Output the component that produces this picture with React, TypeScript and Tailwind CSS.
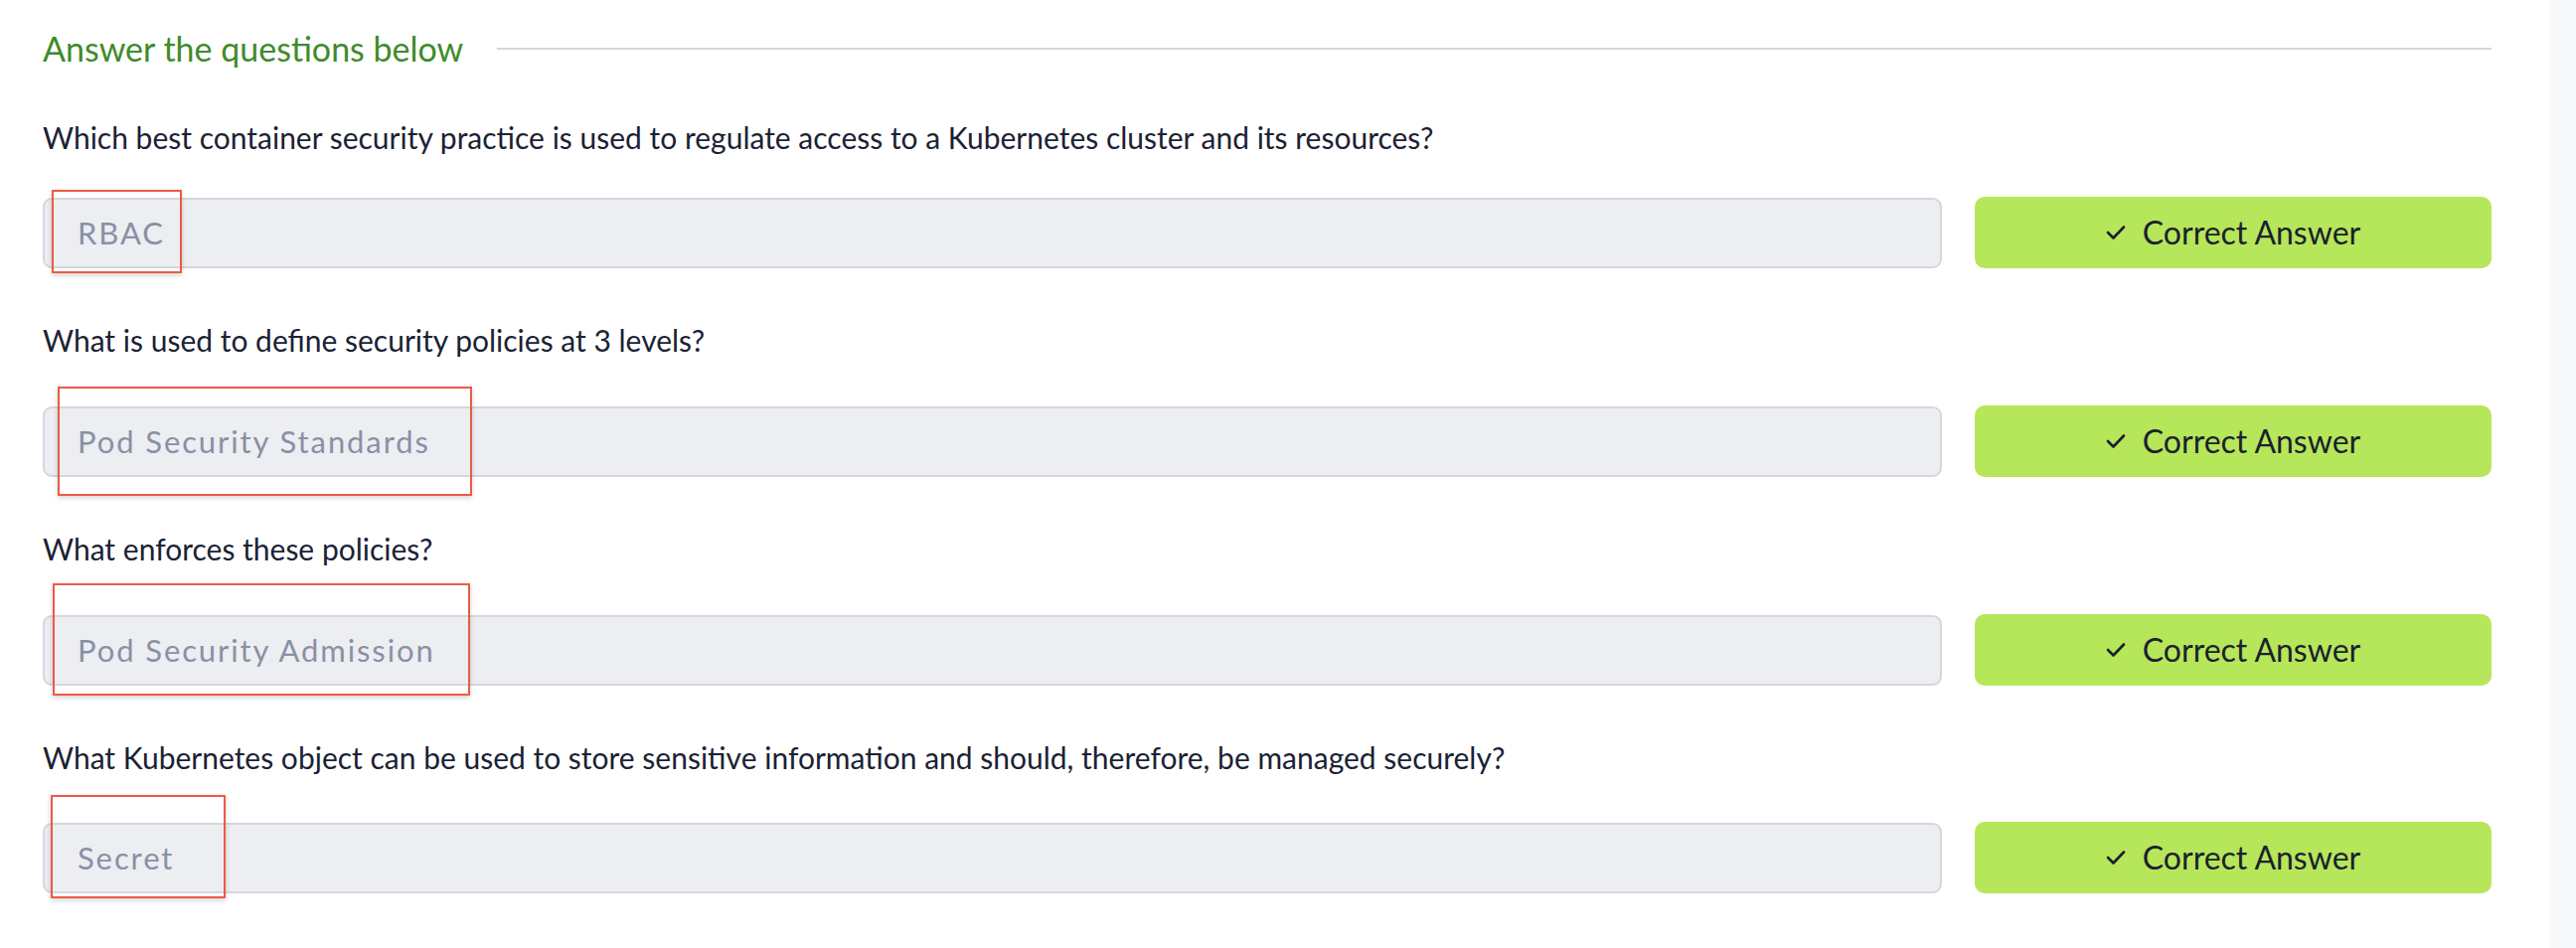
import React from "react";

const FONT = { fontFamily: "Lato, 'Noto Sans', sans-serif" };

function Check() {
  return (
    <svg width="20" height="16" viewBox="0 0 20 16" fill="none" aria-hidden="true">
      <polyline points="2,8 7.5,13.5 18,2.5" stroke="#1c1f2e" strokeWidth="2.6" strokeLinecap="round" strokeLinejoin="round" />
    </svg>
  );
}

function AnswerRow({ answer, box }: { answer: string; box: React.ReactNode }) {
  return (
    <div className="flex items-center gap-[33px]">
      <div className="relative flex-1">
        <div className="h-[71px] rounded-[9px] border-2 border-[#d5d7de] bg-[#eceef2] flex items-center pl-[33px]">
          <span className="text-[31px] tracking-[1.9px] text-[#8a90a5]" style={FONT}>{answer}</span>
        </div>
        {box}
      </div>
      <button className="w-[520px] h-[72px] rounded-[10px] bg-[#b6e659] flex items-center justify-center gap-[17px] text-[#1c1f2e]">
        <Check />
        <span className="text-[32px]" style={FONT}>Correct Answer</span>
      </button>
    </div>
  );
}

const boxCls = "absolute border-2 border-[#ee5a43] shadow-[0_2px_5px_rgba(0,0,0,0.18)] pointer-events-none";

export default function App() {
  return (
    <div className="flex w-full h-[954px] bg-white overflow-hidden" style={FONT}>
      <main className="flex-1 pl-[43px] pr-[59px] pt-[24px]">
        <div className="flex items-center gap-[34px] h-[50px]">
          <h2 className="text-[34px] leading-[50px] text-[#3f8b2b] whitespace-nowrap">Answer the questions below</h2>
          <div className="flex-1 h-[2px] bg-[#d3d7dc]" />
        </div>

        <p className="mt-[42px] text-[30px] leading-[45px] text-[#1b2234]">
          Which best container security practice is used to regulate access to a Kubernetes cluster and its resources?
        </p>
        <div className="mt-[37px]">
          <AnswerRow answer="RBAC" box={<div className={`${boxCls} left-[9px] top-[-8px] w-[131px] h-[84px]`} />} />
        </div>

        <p className="mt-[50px] text-[30px] leading-[45px] text-[#1b2234]">What is used to define security policies at 3 levels?</p>
        <div className="mt-[43px]">
          <AnswerRow answer="Pod Security Standards" box={<div className={`${boxCls} left-[15px] top-[-20px] w-[417px] h-[110px]`} />} />
        </div>

        <p className="mt-[50px] text-[30px] leading-[45px] text-[#1b2234]">What enforces these policies?</p>
        <div className="mt-[43px]">
          <AnswerRow answer="Pod Security Admission" box={<div className={`${boxCls} left-[10px] top-[-32px] w-[420px] h-[113px]`} />} />
        </div>

        <p className="mt-[50px] text-[30px] leading-[45px] text-[#1b2234]">
          What Kubernetes object can be used to store sensitive information and should, therefore, be managed securely?
        </p>
        <div className="mt-[42px]">
          <AnswerRow answer="Secret" box={<div className={`${boxCls} left-[8px] top-[-28px] w-[176px] h-[104px]`} />} />
        </div>
      </main>
      <aside className="w-[26px] bg-[#f7f8fa]" />
    </div>
  );
}
